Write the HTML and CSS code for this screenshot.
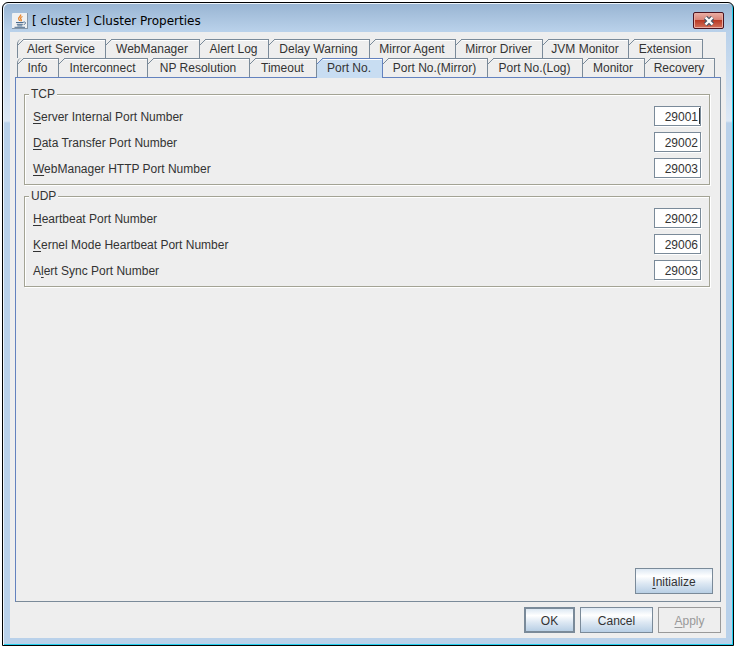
FILE: index.html
```
<!DOCTYPE html>
<html lang="en">
<head>
    <meta charset="UTF-8">
    <title>[ cluster ] Cluster Properties</title>
    <link rel="stylesheet" href="styles.css">
</head>
<body>
    <div class="window">
        <div class="titlebar">
            <svg class="logo" width="16" height="16" viewBox="0 0 16 16">
                <rect x="0" y="0" width="16" height="16" rx="1" fill="#f0f1f2"/>
                <path d="M0 15.5h16M15.5 0v16" stroke="#8797a8" fill="none"/>
                <path d="M8.6 1.5c1 2-3.200 2.600-1.800 5 .4.700 1 1.100 1 1.600M10.500 3.500c-2.500 1-2.200 2.200-1.300 3.200.4.500 0 1.100-.6 1.500" stroke="#e8852c" stroke-width="1.300" fill="none"/>
                <path d="M4 9.500h7.500M4.800 11.300h6M5.300 12.900h5M2.500 14.300h10.500M11.500 9c2.800-.4 2.500 2.100.200 2.600" stroke="#4c6d90" fill="none"/>
            </svg>
            <h1 class="title">[ cluster ] Cluster Properties</h1>
            <button class="close" type="button" aria-label="Close">
                <svg width="12" height="10" viewBox="0 0 12 10">
                    <path d="M2.500 1.500l7 7M9.500 1.500l-7 7" stroke="#4b5868" stroke-width="4.600"/>
                    <path d="M2.500 1.500l7 7M9.500 1.500l-7 7" stroke="#fff" stroke-width="2.400"/>
                </svg>
            </button>
        </div>

        <div class="client">
            <div class="tabs" role="tablist">
                <div class="row row1">
                    <button class="tab" type="button" role="tab">Alert Service</button>
                    <button class="tab" type="button" role="tab">WebManager</button>
                    <button class="tab" type="button" role="tab">Alert Log</button>
                    <button class="tab" type="button" role="tab">Delay Warning</button>
                    <button class="tab" type="button" role="tab">Mirror Agent</button>
                    <button class="tab" type="button" role="tab">Mirror Driver</button>
                    <button class="tab" type="button" role="tab">JVM Monitor</button>
                    <button class="tab" type="button" role="tab">Extension</button>
                </div>
                <div class="row row2">
                    <button class="tab" type="button" role="tab">Info</button>
                    <button class="tab" type="button" role="tab">Interconnect</button>
                    <button class="tab" type="button" role="tab">NP Resolution</button>
                    <button class="tab" type="button" role="tab">Timeout</button>
                    <button class="tab active" type="button" role="tab" aria-selected="true">Port No.</button>
                    <button class="tab" type="button" role="tab">Port No.(Mirror)</button>
                    <button class="tab" type="button" role="tab">Port No.(Log)</button>
                    <button class="tab" type="button" role="tab">Monitor</button>
                    <button class="tab" type="button" role="tab">Recovery</button>
                </div>
            </div>

            <div class="panel" role="tabpanel">
                <fieldset class="group">
                    <legend>TCP</legend>
                    <div class="fields">
                        <div class="field">
                            <label for="internal"><u>S</u>erver Internal Port Number</label>
                            <span class="box caret"><input class="port" id="internal" type="text" value="29001"></span>
                        </div>
                        <div class="field">
                            <label for="transfer"><u>D</u>ata Transfer Port Number</label>
                            <span class="box"><input class="port" id="transfer" type="text" value="29002"></span>
                        </div>
                        <div class="field">
                            <label for="http"><u>W</u>ebManager HTTP Port Number</label>
                            <span class="box"><input class="port" id="http" type="text" value="29003"></span>
                        </div>
                    </div>
                </fieldset>
                <fieldset class="group">
                    <legend>UDP</legend>
                    <div class="fields">
                        <div class="field">
                            <label for="heartbeat"><u>H</u>eartbeat Port Number</label>
                            <span class="box"><input class="port" id="heartbeat" type="text" value="29002"></span>
                        </div>
                        <div class="field">
                            <label for="kernel"><u>K</u>ernel Mode Heartbeat Port Number</label>
                            <span class="box"><input class="port" id="kernel" type="text" value="29006"></span>
                        </div>
                        <div class="field">
                            <label for="sync">A<u>l</u>ert Sync Port Number</label>
                            <span class="box"><input class="port" id="sync" type="text" value="29003"></span>
                        </div>
                    </div>
                </fieldset>
                <button class="btn init" type="button"><u>I</u>nitialize</button>
            </div>

            <div class="footer">
                <button class="btn ok" type="button">OK</button>
                <button class="btn cancel" type="button">Cancel</button>
                <button class="btn apply" type="button" disabled><u>A</u>pply</button>
            </div>
        </div>
    </div>
</body>
</html>
```
FILE: styles.css
```
*{
    margin: 0;
    padding: 0;
    box-sizing: border-box;
}
body{
    display: flex;
    min-height: 100vh;
    padding: 2px;
    background-color: #fff;
    color: #333;
    font-family: "Liberation Sans", Arial, sans-serif;
    font-size: 12px;
    line-height: 14px;
}
button, input{
    font: inherit;
    color: inherit;
}
u{
    text-underline-offset: 2px;
}
.window{
    flex: 1;
    display: flex;
    flex-direction: column;
    padding: 0 7px 7px;
    border: 1px solid #000;
    border-radius: 6px 6px 0 0;
    background: linear-gradient(#98b4d2, #b9d1ea 28px, #dce8f5 118px, #b9d1ea 120px);
    box-shadow: inset 1px 1px #eef5fb, inset -1px -1px #22cfee;
}
/* title bar */
.titlebar{
    display: flex;
    align-items: center;
    height: 29px;
    padding: 6px 2px 0;
}
.titlebar .logo{
    margin-right: 4px;
}
.title{
    flex: 1;
    color: #000;
    font-family: "DejaVu Sans", Verdana, sans-serif;
    font-size: 12px;
    font-weight: normal;
}
.close{
    display: flex;
    align-items: center;
    justify-content: center;
    width: 31px;
    height: 17px;
    border: 1px solid #4b1420;
    border-radius: 2px;
    background: linear-gradient(#e9aea4, #d98578 45%, #b93a25 50%, #d4705a);
    box-shadow: inset 0 0 0 1px #e9aca2;
}
.client{
    flex: 1;
    display: flex;
    flex-direction: column;
    padding: 7px 5px 5px;
    background-color: #eee;
}
/* tabs */
.tabs{
    padding: 0 6px 0 2px;
}
.row{
    display: grid;
}
.row1{
    grid-template-columns: 89fr 94fr 69fr 101fr 86fr 87fr 86fr 74fr;
    margin-right: 12px;
}
.row2{
    grid-template-columns: 42fr 89fr 102fr 67fr 66fr 105fr 95fr 62fr 70fr;
}
.tab{
    --line: #7a8a99;
    --fill: #eee;
    height: 19px;
    padding-right: 1px;
    border: 0;
    border-right: 1px solid var(--line);
    background:
        linear-gradient(135deg, #eee 42%, var(--line) 42%, var(--line) 58%, var(--fill) 58%) 0 0 / 6px 6px no-repeat,
        linear-gradient(var(--line), var(--line)) 6px 0 / 100% 1px no-repeat,
        linear-gradient(#fff, #fff) 6px 1px / 100% 1px no-repeat,
        var(--fill);
    white-space: nowrap;
}
.tab:first-child{
    border-left: 1px solid var(--line);
    border-top-left-radius: 5px;
}
.tab.active{
    --line: #6382bf;
    --fill: #c8ddf2;
    position: relative;
    height: 20px;
    margin-bottom: -1px;
    padding-bottom: 1px;
}
/* tab page */
.panel{
    flex: 1;
    display: flex;
    flex-direction: column;
    padding: 9px 7px 7px 8px;
    border: 1px solid #7a8a99;
    border-top-color: #6382bf;
    border-left-color: #6382bf;
}
.group{
    min-width: 0;
    margin: 0 3px 4px 0;
    padding: 5px 4px 6px;
    border: 1px solid #a3a394;
    box-shadow: 1px 1px #fff, inset 1px 1px #fff;
}
.group legend{
    padding: 0 2px;
    background-color: #eee;
}
.fields{
    display: grid;
    gap: 6px;
    padding: 0 4px;
}
.field{
    display: flex;
    align-items: center;
    justify-content: space-between;
    height: 20px;
}
.field label{
    padding-top: 2px;
}
.box{
    position: relative;
    width: 47px;
    height: 20px;
}
.port{
    display: block;
    width: 100%;
    height: 100%;
    padding: 2px 2px 0;
    border: 1px solid #7a8a99;
    background-color: #fff;
    box-shadow: 1px 1px #fff;
    text-align: right;
    outline: none;
}
/* text cursor of the focused field */
.caret::after{
    content: "";
    position: absolute;
    top: 2px;
    right: 1px;
    width: 1px;
    height: 16px;
    background-color: #333;
}
/* buttons */
.btn{
    height: 26px;
    padding-top: 1px;
    border: 1px solid #7a8a99;
    background: linear-gradient(#dde8f3, #fff 30%, #dde8f3 60%, #b8cfe5);
}
.init{
    align-self: flex-end;
    width: 78px;
    margin-top: auto;
}
.footer{
    display: flex;
    justify-content: flex-end;
    gap: 5px;
    padding-top: 5px;
}
.ok{
    width: 51px;
    border-width: 2px;
}
.cancel{
    width: 73px;
}
.apply{
    width: 63px;
    border-color: #999;
    background: #eee;
    color: #999;
}
```
